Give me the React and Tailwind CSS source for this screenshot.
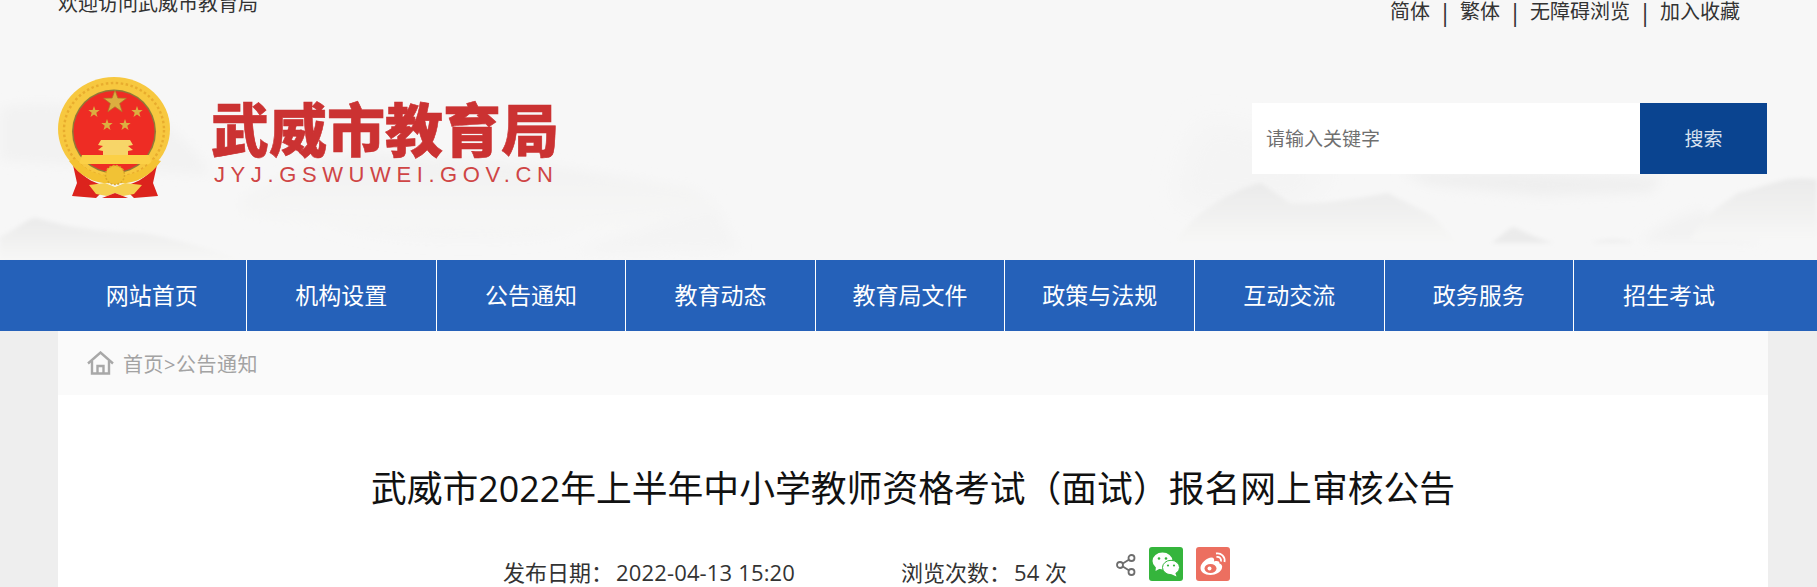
import React from "react";

const FONT = "font-['Open_Sans','Noto_Sans_CJK_SC',sans-serif]";
const NAV_ITEMS = ["网站首页", "机构设置", "公告通知", "教育动态", "教育局文件", "政策与法规", "互动交流", "政务服务", "招生考试"];
const TOP_LINKS = ["简体", "繁体", "无障碍浏览", "加入收藏"];

function starPoints(cx, cy, r) {
  const pts = [];
  for (let i = 0; i < 10; i++) {
    const rad = i % 2 === 0 ? r : r * 0.4;
    const a = (Math.PI / 5) * i - Math.PI / 2;
    pts.push(`${(cx + rad * Math.cos(a)).toFixed(1)},${(cy + rad * Math.sin(a)).toFixed(1)}`);
  }
  return pts.join(" ");
}

// ink wash hills behind the header
function Mountains() {
  return (
    <svg className="absolute inset-0" width="1817" height="260" viewBox="0 0 1817 260">
      <defs>
        <filter id="wide" filterUnits="userSpaceOnUse" x="-50" y="0" width="1917" height="300">
          <feGaussianBlur stdDeviation="12" />
        </filter>
        <filter id="soft" filterUnits="userSpaceOnUse" x="-50" y="0" width="1917" height="300">
          <feGaussianBlur stdDeviation="6" />
        </filter>
        <filter id="crisp" filterUnits="userSpaceOnUse" x="-50" y="0" width="1917" height="300">
          <feGaussianBlur stdDeviation="2" />
        </filter>
        <linearGradient id="fadeA" x1="0" y1="0" x2="0" y2="1">
          <stop offset="0" stopColor="#eaeaea" />
          <stop offset="1" stopColor="#f7f7f6" />
        </linearGradient>
        <linearGradient id="fadeB" x1="0" y1="0" x2="0" y2="1">
          <stop offset="0" stopColor="#f1f1f1" />
          <stop offset="1" stopColor="#f7f7f6" />
        </linearGradient>
      </defs>
      <g filter="url(#wide)">
        <path d="M1175 200 C1185 150 1195 125 1210 122 C1240 125 1300 140 1330 175 L1300 205 L1200 210 Z" fill="#f4f4f4" />
        <path d="M330 208 C400 186 480 184 560 198 C590 208 580 224 500 226 C430 228 360 224 330 208 Z" fill="#eeeeee" />
      </g>
      <g filter="url(#soft)">
        <path d="M0 108 C40 100 90 108 140 112 C170 125 200 150 210 175 L0 160 Z" fill="#f2f2f2" />
        <path d="M241 197 C290 175 330 155 367 153 C430 160 500 160 557 167 C610 175 650 182 689 187 L717 203 C620 240 400 240 241 215 Z" fill="url(#fadeB)" />
        <path d="M574 253 C620 235 680 215 717 207 L740 250 Z" fill="#f4f4f4" />
        <path d="M1400 172 L1514 172 L1663 178 L1650 192 L1540 196 L1430 185 Z" fill="#efefef" />
        <path d="M1640 242 C1660 225 1680 215 1700 210 L1760 242 Z" fill="#f2f2f2" />
      </g>
      <g filter="url(#crisp)">
        <path d="M0 237 C15 230 25 220 35 218 C55 222 80 232 144 233 C180 240 215 250 241 260 L0 260 Z" fill="url(#fadeA)" />
        <path d="M1175 243 C1190 215 1230 190 1261 183 L1290 203 C1320 205 1360 198 1388 193 C1400 200 1420 208 1434 217 L1457 243 Z" fill="url(#fadeA)" />
        <path d="M1491 243 C1500 238 1505 230 1514 227 C1525 232 1540 240 1554 243 Z" fill="#ebebeb" />
        <path d="M1590 243 C1605 238 1620 238 1635 243 Z" fill="#eeeeee" />
        <path d="M1817 180 C1810 178 1795 178 1784 180 C1765 185 1750 190 1738 193 C1720 205 1705 215 1690 240 L1817 240 Z" fill="url(#fadeA)" />
      </g>
    </svg>
  );
}

function Emblem() {
  return (
    <svg width="112" height="121" viewBox="0 0 112 121" className="shrink-0">
      <ellipse cx="56" cy="52" rx="56" ry="52" fill="#f7c83f" />
      <ellipse cx="56" cy="53" rx="50" ry="47" fill="none" stroke="#e8ac2e" strokeWidth="2.4" strokeDasharray="2.5 2.5" />
      <ellipse cx="56" cy="54.5" rx="42" ry="42" fill="#8f7a38" />
      <ellipse cx="56" cy="54.5" rx="40.5" ry="40.5" fill="#ee2c24" />
      <polygon points={starPoints(57, 25, 12)} fill="#dcae40" stroke="#a87c28" strokeWidth="0.7" />
      <polygon points={starPoints(36, 35, 6)} fill="#dcae40" />
      <polygon points={starPoints(79, 35, 6)} fill="#dcae40" />
      <polygon points={starPoints(49, 48, 6)} fill="#dcae40" />
      <polygon points={starPoints(67, 48, 6)} fill="#dcae40" />
      <path d="M43 63 L72 63 L75 68 L70 69 L75 73 L70 74 L70 78 L45 78 L45 74 L40 73 L45 69 L40 68 Z" fill="#f7d568" />
      <path d="M24 78 L91 78 L94 87 L21 87 Z" fill="#fbd046" />
      <path d="M15 88 C26 102 40 108 50 109 L38 121 L14 119 L19 106 Z" fill="#dc231d" />
      <path d="M99 88 C88 102 74 108 64 109 L76 121 L100 119 L95 106 Z" fill="#dc231d" />
      <path d="M11 84 C24 102 40 108 57 106 C74 108 90 102 103 84 L96 82 C84 96 70 100 57 98 C44 100 30 96 18 82 Z" fill="#f4c232" />
      <circle cx="57" cy="98" r="9.5" fill="#f1c235" stroke="#dba72a" strokeWidth="1.5" strokeDasharray="2 1.5" />
      <path d="M31 108 L47 106 L57 110 L67 106 L84 108 L76 117 L65 119 L57 116 L49 119 L38 117 Z" fill="#f6cf50" />
      <path d="M44 121 L57 116 L70 121 Z" fill="#dc231d" />
    </svg>
  );
}

function TopBar() {
  return (
    <div className="relative flex justify-between pl-[58px] pr-[77px] text-[20px] text-[#333333]">
      <span className="leading-[28px] -mt-[10px]">欢迎访问武威市教育局</span>
      <div className="flex items-center h-[24px] leading-[24px]">
        {TOP_LINKS.map((link, index) => (
          <React.Fragment key={link}>
            {index > 0 && <span className="w-[30px] text-center text-[24px]">|</span>}
            <span>{link}</span>
          </React.Fragment>
        ))}
      </div>
    </div>
  );
}

function Logo() {
  return (
    <div className="flex items-start gap-[41px]">
      <Emblem />
      <div className="pt-[20px]">
        <div className="text-[58px] leading-[66px] font-black text-[#cb3232] whitespace-nowrap [-webkit-text-stroke:0.6px_#cb3232]">
          武威市教育局
        </div>
        <div className="-mt-[4px] ml-[3px] text-[22px] leading-[32px] tracking-[5.6px] text-[#cf4545] font-['Liberation_Sans',sans-serif] whitespace-nowrap">
          JYJ.GSWUWEI.GOV.CN
        </div>
      </div>
    </div>
  );
}

function SearchBox() {
  return (
    <div className="flex mt-[26px] w-[515px] h-[71px]">
      <div className="flex-1 bg-white flex items-center pl-[14px] pt-[2px] text-[19px] text-[#6f6f6f]">请输入关键字</div>
      <button type="button" className="w-[127px] bg-[#0a4490] pt-[2px] text-[19px] text-[#d8e1ef]">
        搜索
      </button>
    </div>
  );
}

function Header() {
  return (
    <header className="relative h-[260px] bg-[#f7f7f7] overflow-hidden">
      <Mountains />
      <TopBar />
      <div className="relative flex justify-between items-start pl-[58px] pr-[50px] mt-[53px]">
        <Logo />
        <SearchBox />
      </div>
    </header>
  );
}

function NavBar() {
  return (
    <nav className="h-[71px] bg-[#2561b9]">
      <ul className="flex h-full ml-[57.4px]">
        {NAV_ITEMS.map((item, index) => (
          <li
            key={item}
            className={`w-[189.6px] flex items-center justify-center text-[23px] text-white ${index < NAV_ITEMS.length - 1 ? "border-r border-white" : ""}`}
          >
            {item}
          </li>
        ))}
      </ul>
    </nav>
  );
}

function Breadcrumb() {
  return (
    <div className="h-[64px] bg-[#fafafa] flex items-center pl-[29px] text-[20px] text-[#a3a3a3]">
      <svg width="27" height="24" viewBox="0 0 27 24" fill="none" stroke="#a8a8a8" strokeWidth="2.4" className="mr-[9px]">
        <path d="M1 12.5 L13.5 1.5 L26 12.5" />
        <path d="M5 10 V22.5 H22 V10" />
        <path d="M10.5 22 V15 H16.5 V22" />
      </svg>
      <span className="pt-[3px] tracking-[0.5px]">首页&gt;公告通知</span>
    </div>
  );
}

function ShareIcons() {
  return (
    <div className="flex items-start gap-[13px] -mt-[10px]">
      <svg width="20" height="22" viewBox="0 0 20 22" fill="none" stroke="#6d6d6d" strokeWidth="1.8" className="mt-[7px]">
        <circle cx="15.5" cy="4" r="3" />
        <circle cx="4" cy="11" r="3" />
        <circle cx="15.5" cy="18" r="3" />
        <path d="M6.8 9.4 L12.8 5.7 M6.8 12.6 L12.8 16.3" />
      </svg>
      <span className="w-[34px] h-[34px] rounded-[3px] bg-[#35b53c] flex items-center justify-center">
        <svg width="28" height="25" viewBox="0 0 28 25" fill="#ffffff">
          <ellipse cx="10.5" cy="9" rx="10" ry="8.5" />
          <path d="M4 14 L3.5 19 L9 16 Z" />
          <ellipse cx="19" cy="15.5" rx="8.5" ry="7.2" stroke="#35b53c" strokeWidth="1" />
          <path d="M23 20 L24.5 24.5 L19 22 Z" />
          <circle cx="7" cy="6.5" r="1.3" fill="#35b53c" />
          <circle cx="14" cy="6.5" r="1.3" fill="#35b53c" />
          <circle cx="16" cy="13.5" r="1.1" fill="#35b53c" />
          <circle cx="22" cy="13.5" r="1.1" fill="#35b53c" />
        </svg>
      </span>
      <span className="w-[34px] h-[34px] rounded-[3px] bg-[#ec6f60] flex items-center justify-center">
        <svg width="28" height="26" viewBox="0 0 28 26" fill="none">
          <path d="M11.5 24 C5.5 24 1.5 21 1.5 17 C1.5 12 8 6.5 12.5 6.5 C15 6.5 15.5 8.5 15 10.5 C18 9.5 20.5 10 20.5 12.5 C23 13.5 23.5 15 23 17 C22 21 17 24 11.5 24 Z" fill="#ffffff" />
          <ellipse cx="11.5" cy="17.5" rx="6" ry="4.5" fill="#ec6f60" />
          <circle cx="10.5" cy="17.5" r="2" fill="#ffffff" />
          <path d="M17 2.5 C22 1.5 26.5 5.5 25.5 11 M17.5 6 C20.5 5.5 22.5 7.5 22 10.5" stroke="#ffffff" strokeWidth="1.8" />
        </svg>
      </span>
    </div>
  );
}

function Article() {
  return (
    <div className="bg-white h-[192px] overflow-hidden">
      <h1 className="pt-[68px] text-center text-[35.8px] leading-[50px] font-normal text-[#111111]">
        武威市2022年上半年中小学教师资格考试（面试）报名网上审核公告
      </h1>
      <div className="flex mt-[44px] pl-[445px] text-[22px] leading-[30px] text-[#333333]">
        <span>发布日期：</span>
        <span className="ml-[3px] tracking-[0.15px]">2022-04-13 15:20</span>
        <span className="ml-[106px]">浏览次数：</span>
        <span className="ml-[3px]">54 次</span>
        <span className="ml-[49px]">
          <ShareIcons />
        </span>
      </div>
    </div>
  );
}

export default function App() {
  return (
    <div className={`h-[587px] overflow-hidden bg-[#eeeeee] ${FONT}`}>
      <Header />
      <NavBar />
      <main className="ml-[58px] w-[1710px]">
        <Breadcrumb />
        <Article />
      </main>
    </div>
  );
}
